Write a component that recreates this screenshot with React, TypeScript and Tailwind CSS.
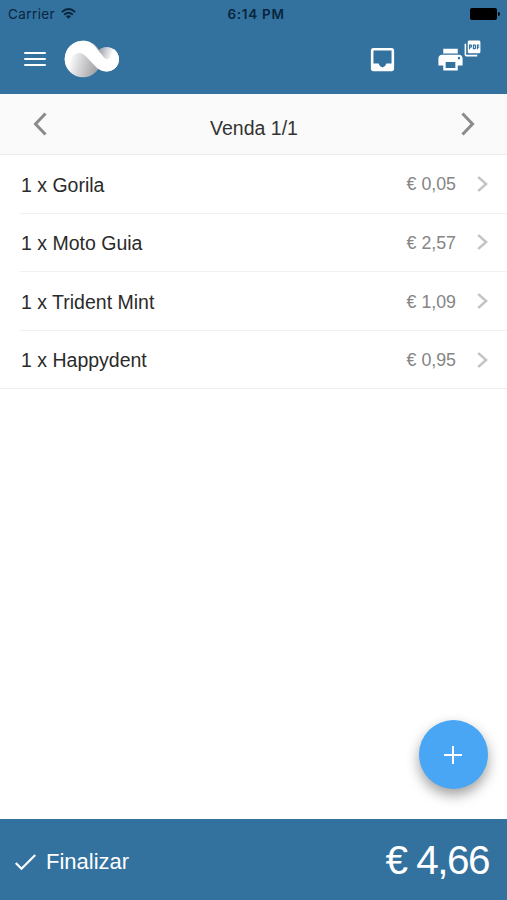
import { MdPictureAsPdf, MdPrint } from "react-icons/md";

const items = [
  { qty: 1, name: "Gorila", price: "0,05" },
  { qty: 1, name: "Moto Guia", price: "2,57" },
  { qty: 1, name: "Trident Mint", price: "1,09" },
  { qty: 1, name: "Happydent", price: "0,95" },
];

function StatusBar() {
  return (
    <div className="flex h-[27px] items-center justify-between pl-2 pr-[7px] font-['Inter'] text-[#08253d]">
      <div className="flex w-[100px] items-center gap-[6px]">
        <span className="pt-px text-[13.500px] tracking-[0.4px]">Carrier</span>
        <svg className="mb-px h-[11px] w-[15px]" viewBox="0 0 15 11" fill="none" stroke="currentColor" strokeWidth="1.9">
          <path d="M.8 4.100Q7.500-2 14.200 4.100" />
          <path d="M3.200 6.700q4.300-3.800 8.600 0" />
          <path d="M7.500 10.800 4.900 8.300q2.600-2 5.200 0z" fill="currentColor" stroke="none" />
        </svg>
      </div>
      <span className="pl-[4px] pt-px text-[13.500px] font-semibold tracking-[0.7px]">6:14 PM</span>
      <div className="flex w-[100px] items-center justify-end gap-px text-black">
        <div className="h-3 w-[27px] rounded-[2px] bg-current" />
        <div className="h-1 w-[2px] rounded-r-full bg-current" />
      </div>
    </div>
  );
}

function Logo() {
  return (
    <svg className="ml-[18px] h-[38px] w-[56px]" viewBox="0 0 56 38">
      <defs>
        <linearGradient id="left" gradientUnits="userSpaceOnUse" x1="5" y1="20" x2="32" y2="27">
          <stop offset="0" stopColor="#fff" />
          <stop offset="0.35" stopColor="#dddcde" />
          <stop offset="1" stopColor="#a5a4a8" />
        </linearGradient>
        <linearGradient id="right" gradientUnits="userSpaceOnUse" x1="34" y1="13" x2="48" y2="17">
          <stop offset="0" stopColor="#9aa3ad" />
          <stop offset="0.3" stopColor="#b9bcc2" />
          <stop offset="1" stopColor="#fff" />
        </linearGradient>
      </defs>
      <circle cx="42.700" cy="19.200" r="12.200" fill="url(#right)" />
      <circle cx="19" cy="19" r="18.300" fill="url(#left)" />
      <path d="M.7 19C.7 9 9 .7 19 .7c5.500 0 9.500 2.300 13 6.800l8 10c4 4 8 1 9.500-8.500C53 11 55 15.500 55 19.200c0 7-5.500 12.200-12.300 12.200-4 0-7.200-1-10.200-3.900L21.500 16c-4-4-9.500-4-13.500 1-2 3-3 6-3 13.500C2 27 .7 23 .7 19z" fill="#fff" />
    </svg>
  );
}

function Chevron({ className, left }: { className: string; left?: boolean }) {
  return (
    <svg className={className} viewBox="0 0 14 24" fill="none" stroke="currentColor" preserveAspectRatio="none">
      <path d={left ? "M12.500 1.500 2.500 12l10 10.500" : "M1.500 1.500l10 10.500-10 10.500"} />
    </svg>
  );
}

function Header() {
  return (
    <header className="h-[94px] shrink-0 bg-[#33729f]">
      <StatusBar />
      <div className="flex h-[64px] items-center pl-6 text-white">
        <div className="flex w-[22px] flex-col gap-1">
          <div className="h-[2px] rounded-full bg-white" />
          <div className="h-[2px] rounded-full bg-white" />
          <div className="h-[2px] rounded-full bg-white" />
        </div>
        <Logo />
        <svg className="ml-[247px] size-[31px]" viewBox="0 0 24 24" fill="currentColor">
          <path d="M19 3H5a2 2 0 0 0-2 2v14a2 2 0 0 0 2 2h14a2 2 0 0 0 2-2V5a2 2 0 0 0-2-2zm0 12h-4l-1 2-2 1.100-2-1.100-1-2H5V5h14z" />
        </svg>
        <MdPrint className="ml-[38px] size-[29px]" />
        <MdPictureAsPdf className="-ml-[2px] mb-[21px] size-[19px]" />
      </div>
    </header>
  );
}

export default function App() {
  return (
    <div className="relative flex h-[900px] w-[507px] flex-col overflow-hidden bg-white font-['Liberation_Sans',sans-serif] text-[#2b2b2b]">
      <Header />

      <div className="flex h-[61px] shrink-0 items-start justify-between border-b border-[#ececec] bg-[#fafafa] pl-[33px] pr-[32px] text-[#8a8a8a]">
        <Chevron left className="mt-[18px] h-6 w-[14px] stroke-3" />
        <h1 className="mt-[20px] text-[19.500px] leading-7 text-[#333]">Venda 1/1</h1>
        <Chevron className="mt-[18px] h-6 w-[14px] stroke-3" />
      </div>

      <ul className="border-b border-[#ededed] pl-5">
        {items.map((item) => (
          <li key={item.name} className="flex h-[58.600px] items-center border-b border-[#f1f1f1] pr-[19px] last:h-[57.500px] last:border-b-0">
            <span className="flex-1 pl-px pt-[3px] text-[19.500px]">
              {item.qty} x {item.name}
            </span>
            <span className="mr-[21px] pt-[2px] text-[17.800px] text-[#858585]">€ {item.price}</span>
            <Chevron className="h-4 w-[11px] stroke-[3.600] text-[#c4c4c4]" />
          </li>
        ))}
      </ul>

      {/* Add item */}
      <button className="absolute right-[19px] top-[720px] flex size-[69px] items-center justify-center rounded-full bg-[#48a6f5] shadow-[0_6px_13px_rgba(0,0,0,0.38)]">
        <svg className="mr-px size-[18px]" viewBox="0 0 18 18" stroke="white" strokeWidth="2">
          <path d="M9 0v18M0 9h18" />
        </svg>
      </button>

      <footer className="mt-auto flex h-[81px] items-center justify-between bg-[#33729f] pl-[15px] pr-[18px] text-white">
        <div className="flex items-center gap-[10px] pt-[3px]">
          <svg className="size-[21px]" viewBox="0 0 21 21" fill="none" stroke="currentColor" strokeWidth="2.2">
            <path d="m.8 12 5.700 5.800L20.200 4" />
          </svg>
          <span className="text-[22px]">Finalizar</span>
        </div>
        <span className="pt-[2px] text-[40.500px] tracking-[-1.500px]">€ 4,66</span>
      </footer>
    </div>
  );
}
